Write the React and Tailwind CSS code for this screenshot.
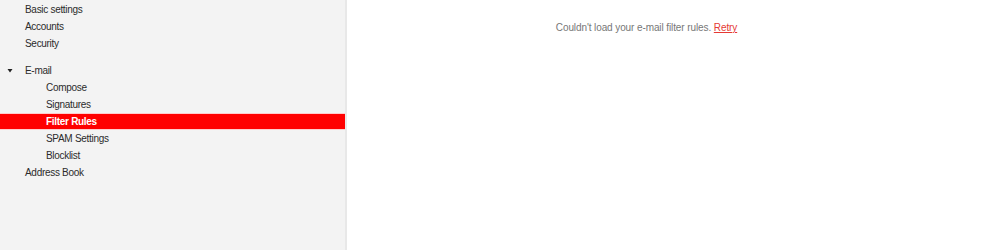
import React from 'react';

const topItems = ['Basic settings', 'Accounts', 'Security'];
const emailItems = ['Compose', 'Signatures', 'Filter Rules', 'SPAM Settings', 'Blocklist'];

const Row = ({ label, indent, active }) => (
  <div
    className={
      'h-[17px] flex items-center ' +
      (indent ? 'pl-[46px] ' : 'pl-[25px] ') +
      (active ? 'bg-[#ff0000] text-white font-bold border-y border-[#ffcccc]' : 'text-[#2b2b2b]')
    }
  >
    {label}
  </div>
);

export default function App() {
  return (
    <div className="flex h-[250px] w-[999px] bg-white text-[10px] font-['Liberation_Sans',Arial,sans-serif]">
      <aside className="w-[347px] shrink-0 bg-[#f3f3f3] border-r-2 border-[#e8e8e8] pt-px tracking-[-0.3px]">
        {topItems.map((t) => (
          <Row key={t} label={t} />
        ))}
        <div className="h-[10px]" />
        <div className="h-[17px] flex items-center text-[#2b2b2b]">
          <svg width="25" height="17" viewBox="0 0 25 17" className="shrink-0">
            <path d="M7.5 7 L12.5 7 L10 10.5 Z" fill="#222" />
          </svg>
          E-mail
        </div>
        {emailItems.map((t) => (
          <Row key={t} label={t} indent active={t === 'Filter Rules'} />
        ))}
        <Row label="Address Book" />
      </aside>
      <main className="flex-1 flex justify-center pr-[53px] pt-[22px]">
        <p className="text-[#777777] h-[12px] leading-[12px] tracking-[-0.1px]">
          Couldn't load your e-mail filter rules.{' '}
          <span className="text-[#e53935] underline">Retry</span>
        </p>
      </main>
    </div>
  );
}
